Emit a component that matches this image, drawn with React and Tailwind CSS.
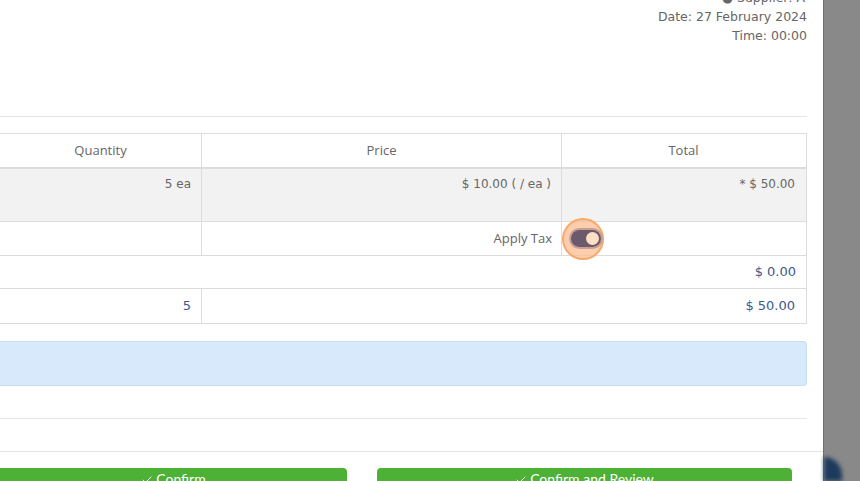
import { Check } from 'lucide-react';

const font = { fontFamily: '"Open Sans", "Noto Sans", sans-serif' };
const num = { fontFamily: '"DejaVu Sans", sans-serif' };

function Cell({ children, className = '' }) {
  return <div className={`px-[10px] flex items-center justify-end ${className}`}>{children}</div>;
}

export default function App() {
  return (
    <div className="w-[860px] h-[481px] overflow-hidden flex bg-white text-[#666]" style={font}>
      {/* modal */}
      <div className="w-[823px] shrink-0 bg-white pr-[16px] flex flex-col">
        {/* header meta */}
        <div className="shrink-0 flex flex-col items-end leading-[19px] text-[#666] mt-[-12px]" style={{ fontFamily: '"DejaVu Sans", sans-serif', fontSize: '12.5px' }}>
          <span className="pr-[2px]">● Supplier: A</span>
          <span>Date: 27 February 2024</span>
          <span>Time: 00:00</span>
        </div>

        <div className="shrink-0 mt-[71px] border-t border-[#e5e5e5]" />

        {/* table */}
        <div className="shrink-0 mt-[16px] border-t border-r border-b border-[#dcdcdc] text-[13px]">
          <div className="grid grid-cols-[202px_360px_243px] h-[35px] border-b-2 border-[#dcdcdc]">
            <div className="flex items-center justify-center border-r border-[#dcdcdc]">Quantity</div>
            <div className="flex items-center justify-center border-r border-[#dcdcdc]">Price</div>
            <div className="flex items-center justify-center">Total</div>
          </div>
          <div className="grid grid-cols-[202px_360px_243px] h-[53px] bg-[#f2f2f2] border-b border-[#dcdcdc] text-[12px]" style={num}>
            <div className="px-[10px] pt-[6px] text-right border-r border-[#dcdcdc]">5 ea</div>
            <div className="px-[10px] pt-[6px] text-right border-r border-[#dcdcdc]">$ 10.00 ( / ea )</div>
            <div className="px-[10px] pt-[6px] text-right">* $ 50.00</div>
          </div>
          <div className="grid grid-cols-[202px_360px_243px] h-[34px] border-b border-[#dcdcdc]">
            <div className="border-r border-[#dcdcdc]" />
            <Cell className="border-r border-[#dcdcdc] pr-[9px]">Apply Tax</Cell>
            <div className="relative flex items-center pl-[9px]">
              <div className="absolute left-[0px] top-[-4px] w-[42px] h-[42px] rounded-full bg-[#fbb98a]/70 border-2 border-[#fba76a]" />
              <div className="relative w-[30px] h-[17px] rounded-full bg-[#6a5a6c] ring-2 ring-[#c99f95] flex items-center justify-end pr-[2px]">
                <div className="w-[13px] h-[13px] rounded-full bg-[#fde0c4]" />
              </div>
            </div>
          </div>
          <div className="h-[33px] border-b border-[#dcdcdc] flex items-center justify-end px-[10px] text-[#3b5a8a]" style={num}>$ 0.00</div>
          <div className="grid grid-cols-[202px_603px] h-[34px] text-[#3b5a8a]" style={num}>
            <Cell className="border-r border-[#dcdcdc]">5</Cell>
            <Cell>$ 50.00</Cell>
          </div>
        </div>

        {/* info box */}
        <div className="shrink-0 mt-[17px] h-[45px] rounded-r-[4px] bg-[#d7e9fa] border border-l-0 border-[#c6def4]" />

        <div className="shrink-0 mt-[32px] border-t border-[#e5e5e5]" />
        <div className="shrink-0 mt-[32px] border-t border-[#e5e5e5] mr-[-16px]" />

        {/* buttons */}
        <div className="shrink-0 mt-[16px] flex gap-[30px]" style={{ fontFamily: 'Lato, sans-serif' }}>
          <button className="w-[347px] h-[34px] bg-[#4cb135] text-white rounded-tr-[4px] text-[14px] leading-[18px] flex items-start justify-center pt-[2px] gap-[3px]">
            <Check size={12} strokeWidth={2} className="mt-[4px]" />Confirm
          </button>
          <button className="w-[415px] h-[34px] bg-[#4cb135] text-white rounded-t-[4px] text-[14px] leading-[18px] flex items-start justify-center pt-[2px] gap-[3px]">
            <Check size={12} strokeWidth={2} className="mt-[4px]" />Confirm and Review
          </button>
        </div>
      </div>

      {/* overlay */}
      <div className="flex-1 bg-[#898989] border-l border-[#6f6f6f] flex flex-col justify-end">
        <div className="w-[18px] h-[24px] rounded-tr-full bg-[#1d3a5c] blur-[2px]" />
      </div>
    </div>
  );
}
